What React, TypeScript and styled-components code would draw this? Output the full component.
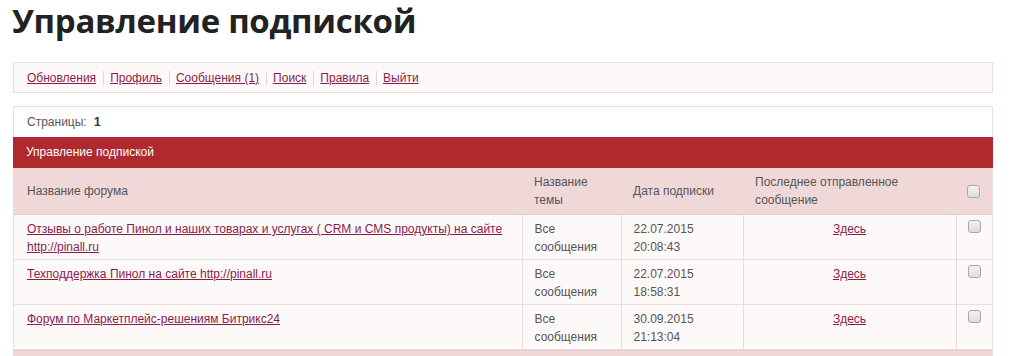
import styled, { createGlobalStyle } from "styled-components";

const GlobalStyle = createGlobalStyle`
  html, body {
    margin: 0;
    padding: 0;
    background: #ffffff;
  }
  body {
    font-family: "Liberation Sans", Arial, sans-serif;
    font-size: 12px;
    color: #555555;
  }
`;

interface Subscription {
  forum: string;
  topic: string;
  date: string;
  time: string;
}

const subscriptions: Subscription[] = [
  {
    forum:
      "Отзывы о работе Пинол и наших товарах и услугах ( CRM и CMS продукты) на сайте http://pinall.ru",
    topic: "Все сообщения",
    date: "22.07.2015",
    time: "20:08:43",
  },
  {
    forum: "Техподдержка Пинол на сайте http://pinall.ru",
    topic: "Все сообщения",
    date: "22.07.2015",
    time: "18:58:31",
  },
  {
    forum: "Форум по Маркетплейс-решениям Битрикс24",
    topic: "Все сообщения",
    date: "30.09.2015",
    time: "21:13:04",
  },
];

const navLinks = ["Обновления", "Профиль", "Сообщения (1)", "Поиск", "Правила", "Выйти"];

function App() {
  return (
    <Page>
      <GlobalStyle />
      <Title>Управление подпиской</Title>

      <NavBar>
        {navLinks.map((link, index) => (
          <NavItem key={link} $first={index === 0}>
            <Link href="#">{link}</Link>
          </NavItem>
        ))}
      </NavBar>

      <Panel>
        <Pager>
          Страницы: <b>1</b>
        </Pager>
        <PanelHeader>Управление подпиской</PanelHeader>
        <Table>
          <colgroup>
            <col style={{ width: 508 }} />
            <col style={{ width: 99 }} />
            <col style={{ width: 122 }} />
            <col style={{ width: 213 }} />
            <col />
          </colgroup>
          <thead>
            <tr>
              <Th>Название форума</Th>
              <Th>Название темы</Th>
              <Th>Дата подписки</Th>
              <Th>Последнее отправленное сообщение</Th>
              <Th>
                <Check type="checkbox" />
              </Th>
            </tr>
          </thead>
          <tbody>
            {subscriptions.map((sub, index) => (
              <tr key={index}>
                <Td>
                  <Link href="#">{sub.forum}</Link>
                </Td>
                <Td>{sub.topic}</Td>
                <Td>
                  {sub.date}
                  <br />
                  {sub.time}
                </Td>
                <Td $center>
                  <Link href="#">Здесь</Link>
                </Td>
                <Td>
                  <Check type="checkbox" />
                </Td>
              </tr>
            ))}
          </tbody>
        </Table>
        <Footer />
      </Panel>
    </Page>
  );
}

const Page = styled.div`
  width: 980px;
  padding: 0 13px;
`;

const Title = styled.h1`
  margin: 0 0 20px -1px;
  font-family: "Open Sans", sans-serif;
  font-weight: 700;
  font-size: 33px;
  line-height: 42px;
  color: #222222;
  letter-spacing: -0.3px;
`;

const NavBar = styled.div`
  display: flex;
  align-items: center;
  height: 29px;
  padding: 0 13px;
  background: #fdf9f9;
  border: 1px solid #ecdcdc;
  margin-bottom: 13px;
`;

const NavItem = styled.span<{ $first?: boolean }>`
  display: flex;
  align-items: center;
  line-height: 14px;
  padding: 0 7px 0 6px;
  padding-left: ${(p) => (p.$first ? "0" : "6px")};
  border-left: ${(p) => (p.$first ? "none" : "1px solid #e2d6d6")};
`;

const Link = styled.a`
  color: #8a1c4d;
  text-decoration: underline;
`;

const Panel = styled.div`
  border: 1px solid #ecdcdc;
  border-bottom: none;
`;

const Pager = styled.div`
  height: 30px;
  line-height: 30px;
  padding: 0 13px;
  background: #ffffff;
  color: #555555;

  b {
    color: #333333;
    margin-left: 4px;
  }
`;

const PanelHeader = styled.div`
  height: 31px;
  line-height: 31px;
  padding: 0 13px;
  margin: 0 -1px;
  background: #b0292e;
  color: #ffffff;
`;

const Table = styled.table`
  width: 100%;
  border-collapse: collapse;
  table-layout: fixed;
`;

const Th = styled.th`
  background: #f0d8d9;
  font-weight: normal;
  text-align: left;
  vertical-align: middle;
  height: 46px;
  padding: 0 12px;
  line-height: 18px;
  color: #555555;
  border-bottom: 1px solid #e2cccc;

  &:first-child {
    padding-left: 13px;
  }
  &:last-child {
    padding-left: 11px;
  }
`;

const Td = styled.td<{ $center?: boolean }>`
  background: #fdf9f9;
  vertical-align: top;
  text-align: ${(p) => (p.$center ? "center" : "left")};
  padding: 5px 12px 3px;
  height: 36px;
  line-height: 18px;
  color: #555555;
  border: 1px solid #ecdcdc;
  border-top: none;

  &:first-child {
    padding-left: 13px;
    border-left: none;
  }
  &:last-child {
    padding-left: 11px;
    border-right: none;
  }
`;

const Check = styled.input`
  appearance: none;
  display: block;
  width: 13px;
  height: 13px;
  margin: 0;
  border: 1px solid #a8a8a8;
  border-radius: 3px;
  background: linear-gradient(#f2f2f2, #dcdcdc);
`;

const Footer = styled.div`
  height: 8px;
  background: #f0d8d9;
  border-top: 1px solid #e2cccc;
`;

export default App;
